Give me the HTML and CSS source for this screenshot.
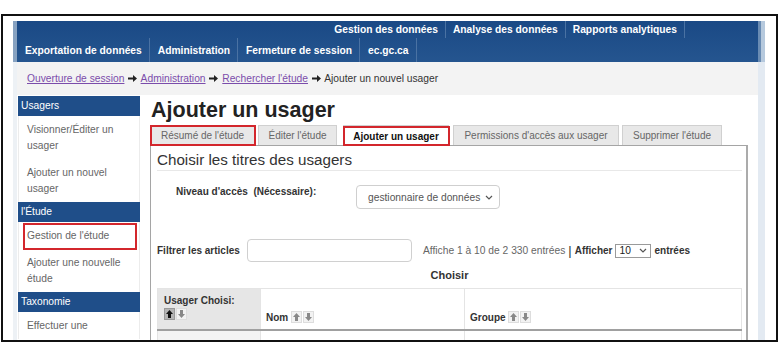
FILE: index.html
```html
<!DOCTYPE html>
<html lang="fr">
<head>
<meta charset="utf-8">
<title>Ajouter un usager</title>
<link rel="stylesheet" href="styles.css">
</head>
<body>
<div class="frame">
  <div class="page">
    <header class="nav">
      <div class="nav-row nav-top">
        <a class="nav-item">Gestion des données</a>
        <a class="nav-item">Analyse des données</a>
        <a class="nav-item">Rapports analytiques</a>
      </div>
      <div class="nav-row nav-main">
        <a class="nav-item">Exportation de données</a>
        <a class="nav-item">Administration</a>
        <a class="nav-item">Fermeture de session</a>
        <a class="nav-item">ec.gc.ca</a>
      </div>
    </header>
    <div class="crumbs">
      <a class="crumb-link">Ouverture de session</a>
      <svg class="crumb-arrow" width="9" height="7" viewBox="0 0 9 7"><path d="M0 2.4H5V0L9 3.5L5 7V4.6H0Z" fill="#222"/></svg>
      <a class="crumb-link">Administration</a>
      <svg class="crumb-arrow" width="9" height="7" viewBox="0 0 9 7"><path d="M0 2.4H5V0L9 3.5L5 7V4.6H0Z" fill="#222"/></svg>
      <a class="crumb-link">Rechercher l'étude</a>
      <svg class="crumb-arrow" width="9" height="7" viewBox="0 0 9 7"><path d="M0 2.4H5V0L9 3.5L5 7V4.6H0Z" fill="#222"/></svg>
      <span>Ajouter un nouvel usager</span>
    </div>
    <div class="layout">
      <aside class="side">
        <div class="side-head">Usagers</div>
        <div class="side-item">Visionner/Éditer un usager</div>
        <div class="side-item">Ajouter un nouvel usager</div>
        <div class="side-head">l'Étude</div>
        <div class="side-item highlight-side">Gestion de l'étude</div>
        <div class="side-item">Ajouter une nouvelle étude</div>
        <div class="side-head">Taxonomie</div>
        <div class="side-item">Effectuer une</div>
      </aside>
      <main class="main">
        <h1 class="title">Ajouter un usager</h1>
        <div class="tabs">
          <div class="tab tab-resume highlight-tab">Résumé de l'étude</div>
          <div class="tab tab-edit">Éditer l'étude</div>
          <div class="tab tab-active highlight-tab">Ajouter un usager</div>
          <div class="tab tab-perm">Permissions d'accès aux usager</div>
          <div class="tab tab-del">Supprimer l'étude</div>
        </div>
        <section class="panel">
          <h2 class="panel-title">Choisir les titres des usagers</h2>
          <div class="access-row">
            <div class="access-label">Niveau d'accès&nbsp; (Nécessaire):</div>
            <div class="select">
              <span>gestionnaire de données</span>
              <svg width="8" height="5" viewBox="0 0 8 5"><polyline points="1,1 4,4 7,1" fill="none" stroke="#555" stroke-width="1.2"/></svg>
            </div>
          </div>
          <div class="filter-row">
            <div class="filter-label">Filtrer les articles</div>
            <div class="filter-input"></div>
            <div class="info">
              <span class="info-muted">Affiche 1 à 10 de 2 330 entrées</span>
              <span class="info-bar">|</span>
              <b>Afficher</b>
              <span class="mini-select">10
                <svg width="8" height="5" viewBox="0 0 8 5"><polyline points="1,1 4,4 7,1" fill="none" stroke="#555" stroke-width="1.2"/></svg>
              </span>
              <b>entrées</b>
            </div>
          </div>
          <div class="choose">Choisir</div>
          <table class="grid">
            <thead>
              <tr>
                <th class="col-chosen">Usager Choisi:<br>
                  <span class="sorts">
                    <svg class="sort" width="11" height="12" viewBox="0 0 11 12"><rect x=".5" y=".5" width="10" height="11" fill="#b4b4b4" stroke="#999"/><path d="M5.5 2L9 6H7V10H4V6H2Z" fill="#111"/></svg><svg class="sort" width="11" height="12" viewBox="0 0 11 12"><rect x=".5" y=".5" width="10" height="11" fill="#f2f2f2" stroke="#ddd"/><path d="M5.5 10L9 6H7V2H4V6H2Z" fill="#888"/></svg>
                  </span>
                </th>
                <th class="col-name">Nom
                  <span class="sorts">
                    <svg class="sort" width="11" height="12" viewBox="0 0 11 12"><rect x=".5" y=".5" width="10" height="11" fill="#f2f2f2" stroke="#ddd"/><path d="M5.5 2L9 6H7V10H4V6H2Z" fill="#888"/></svg><svg class="sort" width="11" height="12" viewBox="0 0 11 12"><rect x=".5" y=".5" width="10" height="11" fill="#f2f2f2" stroke="#ddd"/><path d="M5.5 10L9 6H7V2H4V6H2Z" fill="#888"/></svg>
                  </span>
                </th>
                <th class="col-group">Groupe
                  <span class="sorts">
                    <svg class="sort" width="11" height="12" viewBox="0 0 11 12"><rect x=".5" y=".5" width="10" height="11" fill="#f2f2f2" stroke="#ddd"/><path d="M5.5 2L9 6H7V10H4V6H2Z" fill="#888"/></svg><svg class="sort" width="11" height="12" viewBox="0 0 11 12"><rect x=".5" y=".5" width="10" height="11" fill="#f2f2f2" stroke="#ddd"/><path d="M5.5 10L9 6H7V2H4V6H2Z" fill="#888"/></svg>
                  </span>
                </th>
              </tr>
            </thead>
            <tbody>
              <tr><td class="cell-chosen">&nbsp;</td><td>&nbsp;</td><td>&nbsp;</td></tr>
            </tbody>
          </table>
        </section>
      </main>
    </div>
  </div>
</div>
</body>
</html>
```

FILE: styles.css
```css
body {
  margin: 0;
  background: #fff;
  font-family: "Liberation Sans", Arial, sans-serif;
}

.frame {
  margin: 14px 0 0 1px;
  width: 777px;
  height: 328px;
  box-sizing: border-box;
  border: 2px solid #111;
  overflow: hidden;
}

.page {
  margin: 5px 0 0 10px;
  width: 752px;
  height: 400px;
  box-sizing: border-box;
  border-left: 4px solid #edf1f5;
  border-right: 7px solid #e3eaf2;
}

/* ---------- top navigation ---------- */
.nav {
  background: linear-gradient(#1a4985, #25558f);
  box-shadow: 3px 0 0 #6a8cb3, 7px 0 0 #b6c9dd, -4px 0 0 #87a2c1;
}

.nav-row {
  display: flex;
}

.nav-top {
  justify-content: flex-end;
  height: 17px;
  padding-right: 73px;
}

.nav-item {
  color: #fff;
  font-weight: bold;
  font-size: 10.25px;
  text-decoration: none;
  white-space: nowrap;
  border-right: 1px solid #4a72a3;
}

.nav-top .nav-item {
  padding: 0 7px;
  line-height: 17px;
}

.nav-main {
  height: 24px;
}

.nav-main .nav-item {
  padding: 0 7px 0 8px;
  line-height: 26px;
}

/* ---------- breadcrumb ---------- */
.crumbs {
  height: 33px;
  line-height: 33px;
  background: #f3f3f3;
  padding-left: 10px;
  font-size: 10.25px;
  color: #333;
  white-space: nowrap;
}

.crumb-link {
  color: #7b4dab;
  text-decoration: underline;
}

.crumb-arrow {
  margin: 0 1px;
  vertical-align: 0;
}

/* ---------- layout ---------- */
.layout {
  display: flex;
  padding-top: 1px;
}

.side {
  width: 122px;
  margin-left: 1px;
  flex: none;
}

.side-head {
  background: #1f4e89;
  color: #fff;
  font-size: 10.25px;
  height: 20px;
  line-height: 20px;
  padding-left: 3px;
}

.side-item {
  position: relative;
  font-size: 10.25px;
  color: #666;
  line-height: 16px;
  padding: 6px 6px 5px 8px;
  border-left: 1px solid #ececec;
  border-right: 1px solid #ececec;
}

.highlight-side::after {
  content: "";
  position: absolute;
  top: 1px;
  left: 4px;
  right: 2px;
  bottom: -1px;
  border: 2px solid #d3262c;
}

.main {
  margin-left: 10px;
  width: 598px;
  flex: none;
}

.title {
  margin: 1px 0 2px 1px;
  font-size: 21.5px;
  line-height: 26px;
  font-weight: bold;
  color: #222;
}

/* ---------- tabs ---------- */
.tabs {
  display: flex;
  align-items: flex-end;
  height: 20px;
}

.tab {
  position: relative;
  box-sizing: border-box;
  height: 20px;
  line-height: 19px;
  font-size: 10px;
  color: #666;
  text-align: center;
  background: #e8e8e8;
  border: 1px solid #d0d0d0;
  border-bottom: none;
  white-space: nowrap;
}

.tab-resume { width: 105px; }
.tab-edit { width: 79px; margin-left: 3px; }
.tab-active {
  width: 106px;
  margin-left: 6px;
  height: 21px;
  margin-bottom: -1px;
  background: #fff;
  color: #111;
  font-weight: bold;
  line-height: 21px;
  z-index: 1;
}
.tab-perm { width: 166px; margin-left: 4px; }
.tab-del { width: 100px; margin-left: 3px; }

.highlight-tab::after {
  content: "";
  position: absolute;
  top: -1px;
  left: -1px;
  right: -2px;
  bottom: -1px;
  border: 2px solid #d3262c;
}

.tab-active.highlight-tab::after {
  left: -1px;
  right: -2px;
  top: 0;
  bottom: 0;
}

/* ---------- panel ---------- */
.panel {
  box-sizing: border-box;
  width: 598px;
  height: 300px;
  border: 1px solid #a5a5a5;
  border-right: 2px solid #ababab;
  padding: 4px 4px 0 6px;
}

.panel-title {
  margin: 0;
  font-size: 15.2px;
  font-weight: normal;
  line-height: 20px;
  color: #333;
  border-bottom: 1px solid #e8e8e8;
}

.access-row {
  display: flex;
  align-items: flex-start;
  margin-top: 14px;
}

.access-label {
  box-sizing: border-box;
  width: 199px;
  padding-left: 19px;
  font-size: 10px;
  line-height: 14px;
  font-weight: bold;
  color: #333;
}

.select {
  box-sizing: border-box;
  width: 144px;
  height: 24px;
  display: flex;
  align-items: center;
  justify-content: space-between;
  padding: 0 6px 0 11px;
  border: 1px solid #cfcfcf;
  border-radius: 4px;
  font-size: 10.25px;
  color: #555;
  white-space: nowrap;
}

.filter-row {
  display: flex;
  align-items: center;
  margin-top: 30px;
}

.filter-label {
  width: 90px;
  font-size: 10px;
  font-weight: bold;
  color: #333;
  white-space: nowrap;
}

.filter-input {
  box-sizing: border-box;
  width: 165px;
  height: 23px;
  border: 1px solid #d0d0d0;
  border-radius: 4px;
}

.info {
  margin-left: 11px;
  font-size: 10.25px;
  color: #333;
  display: flex;
  align-items: center;
  gap: 3px;
  white-space: nowrap;
}

.info-muted {
  color: #666;
}

.info-bar {
  font-size: 13px;
  color: #333;
}

.info b {
  font-weight: bold;
  font-size: 10px;
}

.mini-select {
  box-sizing: border-box;
  display: inline-flex;
  align-items: center;
  justify-content: space-between;
  width: 36px;
  height: 14px;
  padding: 0 3px 0 3px;
  border: 1px solid #9a9a9a;
  font-size: 10.25px;
  color: #222;
}

.choose {
  margin-top: 6px;
  text-align: center;
  font-size: 11px;
  font-weight: bold;
  line-height: 14px;
  color: #333;
}

/* ---------- table ---------- */
.grid {
  margin-top: 6px;
  width: 585px;
  border-collapse: collapse;
  font-size: 10px;
  color: #333;
}

.grid th {
  height: 41px;
  box-sizing: border-box;
  text-align: left;
  vertical-align: bottom;
  font-weight: bold;
  line-height: 14px;
  padding: 0 5px 4px 5px;
  border: 1px solid #e4e4e4;
  border-bottom: 2px solid #a0a0a0;
}

.grid th.col-chosen {
  width: 103px;
  background: #e6e6e6;
  padding-left: 6px;
  padding-bottom: 7px;
}

.grid th.col-name {
  width: 204px;
}

.sorts {
  display: inline-flex;
  gap: 1px;
  vertical-align: -2px;
}

.sort {
  display: block;
}

.grid td {
  height: 20px;
  border: 1px solid #e4e4e4;
}

.grid td.cell-chosen {
  background: #f4f4f4;
}
```
